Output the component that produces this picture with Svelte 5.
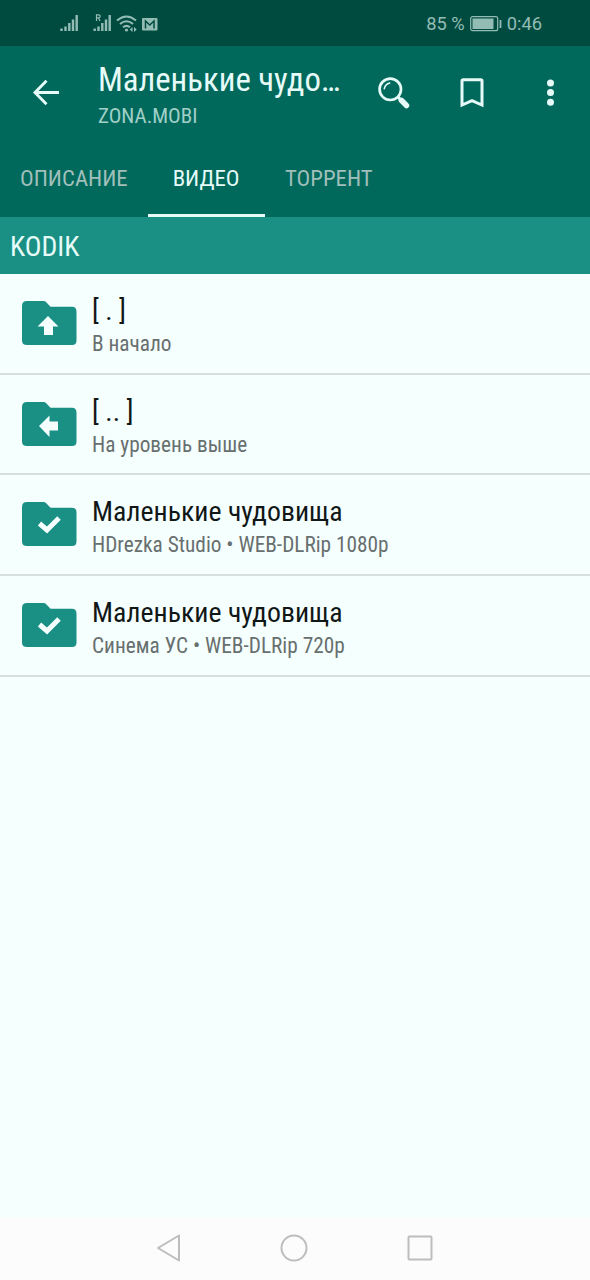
<script lang="ts">
  type Icon = 'up' | 'back' | 'check'
  interface Entry { icon: Icon; title: string; note: string }

  const tabs = ['ОПИСАНИЕ', 'ВИДЕО', 'ТОРРЕНТ']
  let active = $state(1)

  const entries: Entry[] = [
    { icon: 'up', title: '[ . ]', note: 'В начало' },
    { icon: 'back', title: '[ .. ]', note: 'На уровень выше' },
    { icon: 'check', title: 'Маленькие чудовища', note: 'HDrezka Studio • WEB-DLRip 1080p' },
    { icon: 'check', title: 'Маленькие чудовища', note: 'Синема УС • WEB-DLRip 720p' },
  ]

  const glyphs: Record<Icon, string> = {
    up: 'M26 15L36.500 25.500H31V34H22V25.500H15.500Z',
    back: 'M17 24L27.500 13.500V19.500H36V28.500H27.500V35Z',
    check: 'M17.500 21.500L25 28L37 16',
  }
</script>

<div class="screen">
  <div class="status">
    <svg width="102" height="20" viewBox="0 0 102 20" fill="none">
      <path d="M1.500 14.500v2.500M5.500 12.500v4.500M9.300 9v8M13 5.500v11.500M16.700 1v16" stroke="#93bdb4" stroke-width="2.400" />
      <path d="M34.700 14.500v2.500M38.500 12.500v4.500M42.300 9v8M46 5.500v11.500M49.700 1v16" stroke="#93bdb4" stroke-width="2.400" />
      <path d="M36.500 7V.8h2.200a1.500 1.500 0 010 3H36.500M38.500 4l1.500 3" stroke="#93bdb4" stroke-width="1.200" />
      <path d="M57 6.500q9.500-8 19 0M60 10q6.500-5.500 13 0M63 13.200q3.500-2.700 7 0" stroke="#93bdb4" stroke-width="2" />
      <circle cx="66.500" cy="16" r="1.600" fill="#93bdb4" />
      <path d="M72.500 13v5L69.800 15.500zM74 13v5l2.700-2.500z" fill="#93bdb4" />
      <rect x="82" y="4" width="15.500" height="12.500" rx="1" fill="#93bdb4" />
      <path d="M85.500 14.500V7l4.250 4 4.250-4V14.500" stroke="#004b40" stroke-width="1.500" />
    </svg>
    <div class="power">
      <span>85 %</span>
      <svg width="32" height="16" viewBox="0 0 32 16" fill="none">
        <rect x=".7" y=".7" width="27" height="14" rx="2" stroke="#93bdb4" stroke-width="1.200" />
        <rect x="2.500" y="2.500" width="21" height="10.500" fill="#93bdb4" />
        <path d="M30.500 4v8" stroke="#93bdb4" stroke-width="1.800" />
      </svg>
      <span>0:46</span>
    </div>
  </div>

  <header>
    <div class="bar">
      <button class="arrow" aria-label="Назад">
        <svg width="28" height="28" viewBox="0 0 28 28" fill="none"><path d="M14.500 1.800L3 13.500l11.500 11.700M3 13.500H27" stroke="#e6fbf8" stroke-width="2.900" /></svg>
      </button>
      <div class="heading">
        <h1>Маленькие чудо…</h1>
        <p>ZONA.MOBI</p>
      </div>
      <div class="actions">
        <button aria-label="Поиск">
          <svg width="32" height="32" viewBox="0 0 32 32" fill="none" stroke="#e6fbf8">
            <circle cx="12.300" cy="12.300" r="10.700" stroke-width="2.700" />
            <path d="M6.300 11.700Q7.200 7 11.700 6" stroke-width="1.600" stroke-linecap="round" />
            <path d="M20 20l3.200 3.200" stroke-width="3" />
            <path d="M23.300 23.300l5.200 5.200" stroke-width="5.500" stroke-linecap="round" />
          </svg>
        </button>
        <button class="mark" aria-label="Закладка">
          <svg width="24" height="30" viewBox="0 0 24 30" fill="none"><path d="M2 27V3q0-1.200 1.200-1.200h17.600Q22 1.800 22 3v24l-10-4.400z" stroke="#e6fbf8" stroke-width="3" /></svg>
        </button>
        <button aria-label="Меню">
          <svg width="8" height="28" viewBox="0 0 8 28" fill="#e6fbf8"><circle cx="3.500" cy="4" r="3.500" /><circle cx="3.500" cy="13.600" r="3.500" /><circle cx="3.500" cy="23.200" r="3.500" /></svg>
        </button>
      </div>
    </div>
    <nav>
      {#each tabs as tab, i}
        <button class="tab" class:active={i === active} onclick={() => active = i}>{tab}</button>
      {/each}
    </nav>
  </header>

  <h2>KODIK</h2>

  <ul>
    {#each entries as entry}
      <li>
        <svg class="folder" width="55" height="45" viewBox="0 0 55 45" fill="none">
          <path d="M5 0H21.500Q23 0 24 1L28.500 5.700H50Q54.500 5.700 54.500 10.500V39.500Q54.500 44 50 44H5Q0 44 0 39.500V5Q0 0 5 0Z" fill="#1a8f84" />
          {#if entry.icon === 'check'}
            <path d={glyphs.check} stroke="#f5fffe" stroke-width="5" />
          {:else}
            <path d={glyphs[entry.icon]} fill="#f5fffe" />
          {/if}
        </svg>
        <div class="label">
          <span class="title">{entry.title}</span>
          <span class="note">{entry.note}</span>
        </div>
      </li>
    {/each}
  </ul>

  <footer>
    <svg width="25" height="30" viewBox="0 0 25 30"><path d="M2 15L23 2.500v25z" /></svg>
    <svg width="28" height="28" viewBox="0 0 28 28"><circle cx="14" cy="14" r="12.500" /></svg>
    <svg width="26" height="26" viewBox="0 0 26 26"><rect x="1.500" y="1.500" width="23" height="23" rx="1" /></svg>
  </footer>
</div>

<style>
  :global(body) { margin: 0; }
  .screen { display: flex; flex-direction: column; height: 1280px; background: #f5fffe; font-family: 'Roboto Condensed', Roboto, sans-serif; font-stretch: 75%; white-space: nowrap; overflow: hidden; }
  button { padding: 0; border: 0; background: none; font: inherit; color: inherit; }
  svg { display: block; flex: none; }
  h1, h2, p, ul { margin: 0; padding: 0; font-weight: 400; }

  .status { box-sizing: border-box; display: flex; align-items: center; justify-content: space-between; height: 46px; padding: 2px 48px 0 60px; background: #004b40; color: #93bdb4; font-family: Roboto, sans-serif; font-stretch: 100%; font-size: 18.300px; }
  .power { display: flex; align-items: center; gap: 5px; margin-top: -1px; }

  header { height: 171px; background: #00695c; color: #e6fbf8; }
  .bar { display: flex; align-items: center; box-sizing: border-box; height: 94px; padding: 0 35px 0 32px; }
  .heading { width: 246px; margin-left: 38px; padding-top: 7px; }
  h1 { font-size: 32.800px; line-height: 38px; }
  p { font-size: 21px; line-height: 34px; color: #a0d0c8; }
  .actions { display: flex; align-items: center; justify-content: space-between; width: 177px; margin-left: auto; }
  .mark { margin-right: 14px; }
  nav { display: flex; height: 77px; }
  .tab { box-sizing: border-box; height: 77px; padding: 2px 20px 0; border-bottom: 3px solid transparent; font-size: 22.800px; color: #a0bfba; }
  .tab.active { padding: 2px 25.500px 0 25px; color: #e6fbf8; border-color: #e6fbf8; }

  h2 { height: 57px; padding-left: 10px; background: #1a8f84; color: #e6fbf8; font-size: 27.800px; line-height: 60px; }

  ul { flex: 1; list-style: none; }
  li { display: flex; box-sizing: border-box; height: 100.700px; padding: 27px 22px 0; border-bottom: 2px solid #d6dfde; }
  .label { display: flex; flex-direction: column; margin: -8px 0 0 15px; }
  .title { font-size: 27.800px; line-height: 36px; color: #111717; }
  .note { font-size: 21.300px; line-height: 29px; color: #686f6f; }

  footer { display: flex; align-items: center; box-sizing: border-box; height: 63px; padding: 0 157px 2px 156px; justify-content: space-between; background: #fcfcfc; }
  footer svg { fill: none; stroke: #bdbdbd; stroke-width: 2; stroke-linejoin: round; }
</style>
